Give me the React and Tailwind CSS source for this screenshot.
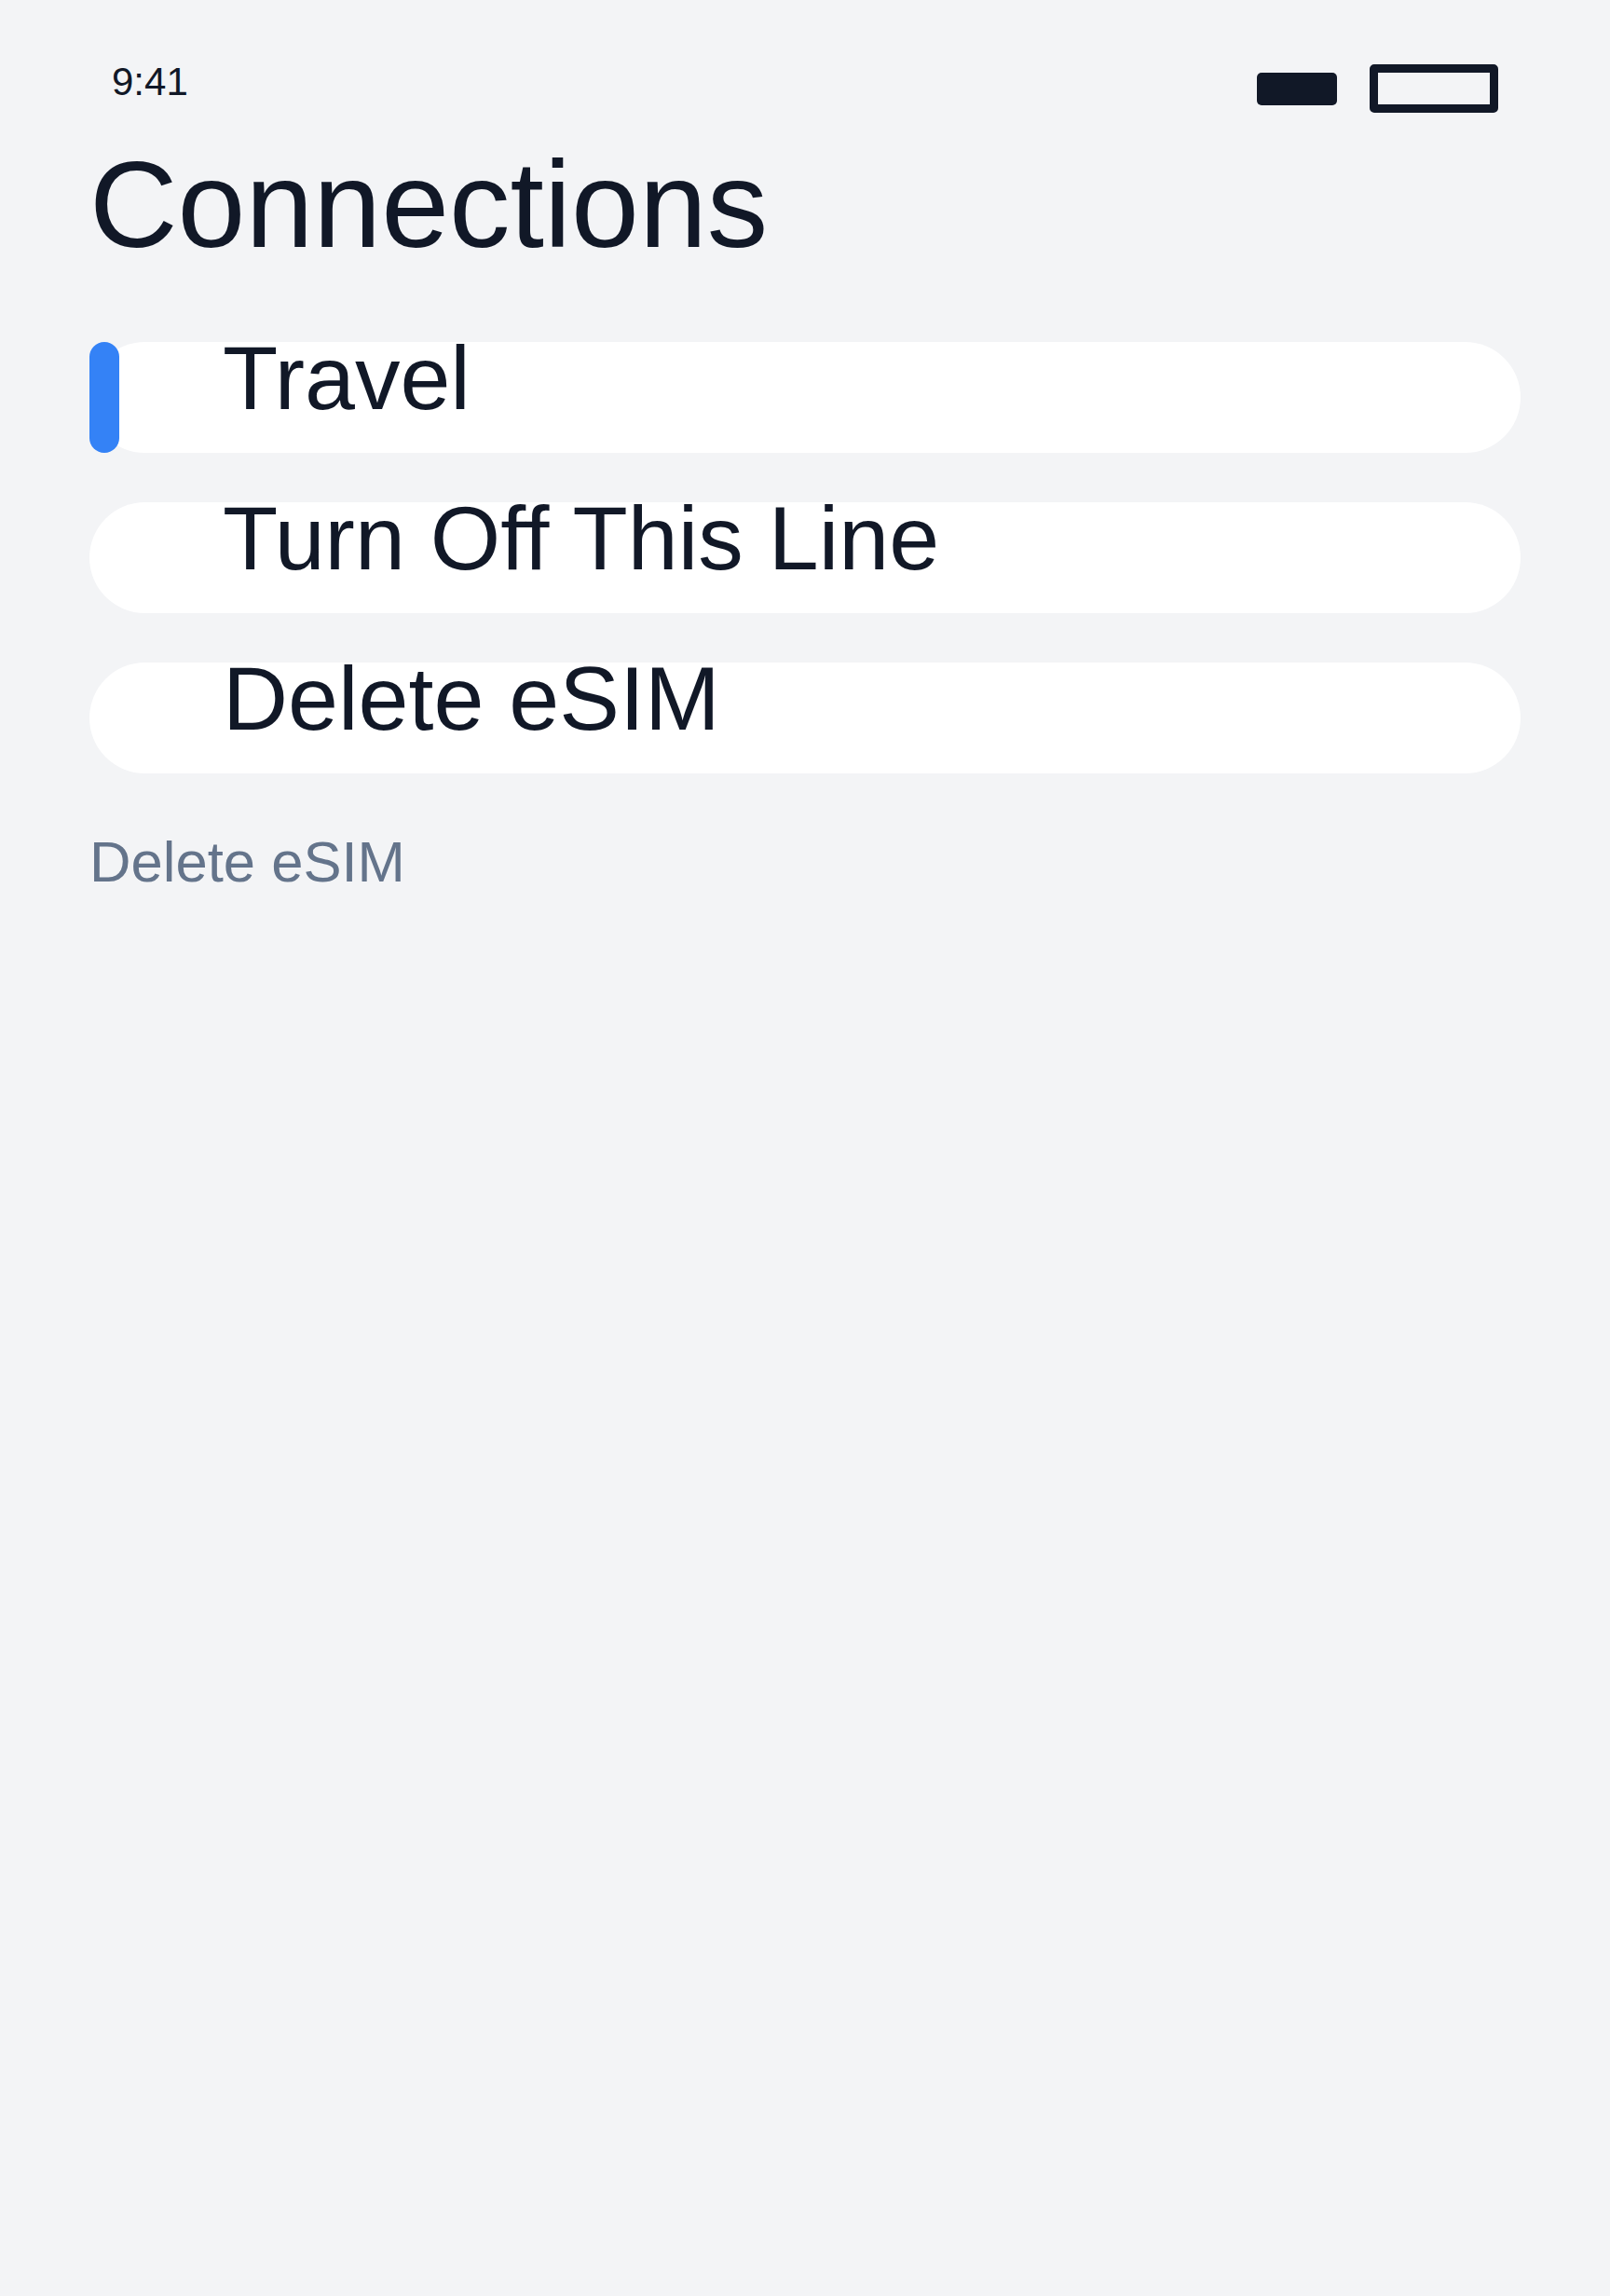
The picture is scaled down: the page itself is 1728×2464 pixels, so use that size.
const rows = [
  { label: 'Travel', active: true },
  { label: 'Turn Off This Line', active: false },
  { label: 'Delete eSIM', active: false },
]

export default function App() {
  return (
    <div
      className="min-h-[2464px] w-full bg-[#f3f4f6] px-[96px] text-[#111827]"
      style={{ fontFamily: '"Liberation Sans", Arial, sans-serif' }}
    >
      {/* Status bar */}
      <div className="flex items-start justify-between px-[24px] pt-[67px]">
        <span className="text-[42px] leading-none">9:41</span>
        <div className="mt-[2px] flex items-center gap-[35px]">
          <div className="h-[35px] w-[86px] rounded-[5px] bg-[#111827]" />
          <div className="h-[52px] w-[138px] rounded-[5px] border-[9px] border-[#111827]" />
        </div>
      </div>

      <h1 className="mt-[33px] text-[131px] font-normal leading-none">Connections</h1>

      {/* Options */}
      <div className="mt-[82px] flex flex-col gap-[53px]">
        {rows.map((row) => (
          <button
            key={row.label}
            className="relative h-[119px] w-full rounded-full bg-white pl-[143px] text-left"
          >
            {row.active && (
              <span className="absolute left-0 top-0 h-full w-[32px] rounded-full bg-[#3482f6]" />
            )}
            <div className="-mt-[20px] h-full text-[97px] leading-none">{row.label}</div>
          </button>
        ))}
      </div>

      <p className="mt-[64px] text-[61.6px] leading-none text-[#64748b]">Delete eSIM</p>
    </div>
  )
}
